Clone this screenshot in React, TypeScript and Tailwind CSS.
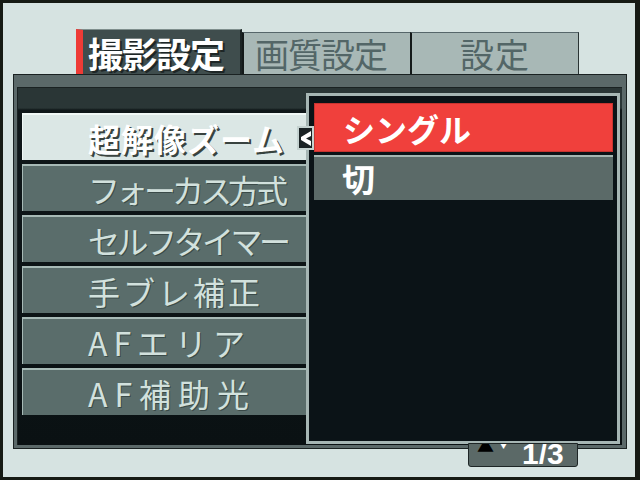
import React from "react";

const JP = "font-['Noto_Sans_CJK_JP','Noto_Sans',sans-serif]";

const items: { label: string; cls: string }[] = [
  { label: "フォーカス方式", cls: "tracking-[-4px]" },
  { label: "セルフタイマー", cls: "tracking-[-3.5px]" },
  { label: "手ブレ補正", cls: "tracking-[3px]" },
  { label: "AFエリア", cls: "tracking-[6px]" },
  { label: "AF補助光", cls: "tracking-[7px]" },
];

export default function App() {
  return (
    <div
      className={`relative w-[640px] h-[480px] overflow-hidden bg-[#d6e3e1] border-t-[3px] border-l-[3px] border-r-[5px] border-b-[3px] border-[#161a14] flex flex-col ${JP}`}
    >
      {/* Tabs */}
      <div className="ml-[73px] mt-[26px] h-[45px] flex items-end">
        <div className="w-[166px] h-[45px] bg-[#3f4d4d] border-l-[7px] border-l-[#ee3b36] border-t border-t-[#7f8f8d] border-r-2 border-r-[#1c2424] flex items-center pl-[5px]">
          <span className="text-[35px] leading-none font-bold tracking-[-1px] text-white [text-shadow:2px_2px_0_#1e2626]">
            撮影設定
          </span>
        </div>
        <div className="w-[168px] h-[42px] bg-[#a8b8b6] border-t border-t-[#56666a] border-l-2 border-l-[#141a1a] flex items-center pl-[11px]">
          <span className="text-[34px] leading-none tracking-[-1px] text-[#536667]">画質設定</span>
        </div>
        <div className="w-[169px] h-[42px] bg-[#a8b8b6] border-t border-t-[#56666a] border-l-2 border-l-[#141a1a] border-r border-r-[#2a3434] flex items-center justify-center">
          <span className="text-[34px] leading-none tracking-[1px] text-[#536667]">設定</span>
        </div>
      </div>

      {/* Main panel */}
      <div className="ml-[10px] w-[614px] h-[375px] border border-[#1a2222] bg-[#5b6969] pt-[12px] pl-[3px] pr-[4px] pb-[3px] flex">
        <div className="relative flex-1 flex bg-[linear-gradient(to_bottom,#2a3636_0px,#2a3636_20px,#0f1719_22px,#0a1113_100%)] border-t border-l border-[#1a2222]">
          {/* Left column */}
          <div className="w-[288px] pt-[25px] pl-[4px] flex flex-col gap-[4px]">
            <div className="h-[47px] bg-[#dbe7e5] border-t-2 border-l border-[#f0f8f6] flex items-center pl-[65px]">
              <span className="text-[32px] leading-none tracking-[1px] font-bold text-white [text-shadow:2px_2px_0_#39433f]">
                超解像ズーム
              </span>
            </div>
            {items.map((it) => (
              <div
                key={it.label}
                className="h-[47px] bg-[#5a6d6b] border-t-2 border-l border-[#a7bab6] flex items-center pl-[65px]"
              >
                <span
                  className={`text-[32px] leading-none text-[#d2e1dd] [text-shadow:1px_1px_0_#3a4a48] whitespace-nowrap ${it.cls}`}
                >
                  {it.label}
                </span>
              </div>
            ))}
          </div>

          {/* Right column */}
          <div className="flex-1 pt-[5px] pr-[2px] pb-[1px] flex">
            <div className="flex-1 border-[3px] border-[#a6b6b4] bg-[#0b1317] pt-[7px] pl-[5px] pr-[4px] flex flex-col gap-[3px]">
              <div className="h-[49px] bg-[#f0403c] border border-[#c73430] flex items-center pl-[28px]">
                <span className="text-[32px] leading-none font-bold text-white">シングル</span>
              </div>
              <div className="h-[45px] bg-[#5b6a68] border-t-2 border-[#a6b6b2] flex items-center pl-[28px]">
                <span className="text-[33px] leading-none font-bold text-white">切</span>
              </div>
            </div>
          </div>

          {/* Arrow marker */}
          <div className="absolute left-[279px] top-[38px] w-[17px] h-[24px] bg-[#1a2224] border-2 border-[#c4d2d0] flex items-center justify-center">
            <svg width="12" height="17" viewBox="0 0 12 17">
              <polygon points="11,1 11,6 6,8.5 11,11 11,16 1,10 1,7" fill="#ffffff" />
            </svg>
          </div>
        </div>
      </div>

      {/* Page indicator (partly under the panel) */}
      <div className="absolute left-[465px] top-[440px] w-[110px] h-[24px] bg-[#5b6967] border border-[#1e2626] rounded-b-[3px] overflow-hidden">
        <span className="absolute left-[8px] top-[-8px] text-[17px] leading-none text-black">▲</span>
        <span className="absolute left-[29px] top-[-5px] text-[11px] leading-none text-white">▼</span>
        <span className="absolute left-[53px] top-[-5px] text-[30px] leading-none font-bold text-white font-['Liberation_Sans',sans-serif]">
          1/3
        </span>
      </div>
    </div>
  );
}
